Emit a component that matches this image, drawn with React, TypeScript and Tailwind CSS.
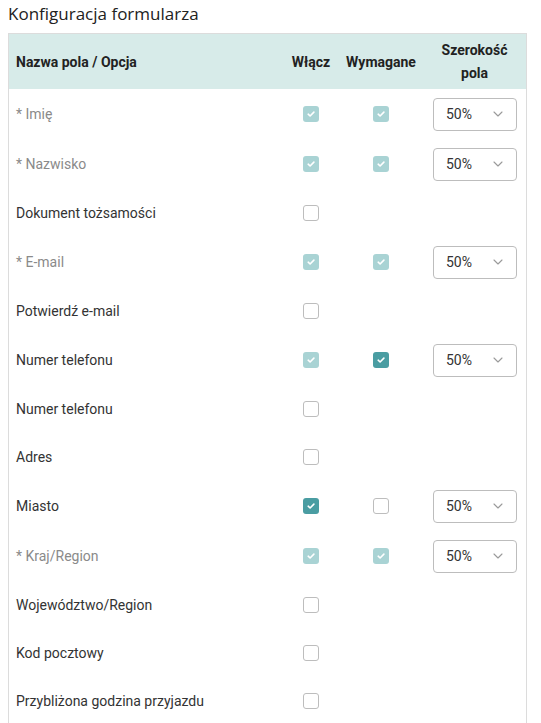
import React from 'react'

type Row = {
  label: string
  required?: boolean // label shown with * and greyed
  enabled: 'on' | 'off' | 'locked'
  req?: 'on' | 'off' | 'locked'
  width?: string
}

const rows: Row[] = [
  { label: '* Imię', required: true, enabled: 'locked', req: 'locked', width: '50%' },
  { label: '* Nazwisko', required: true, enabled: 'locked', req: 'locked', width: '50%' },
  { label: 'Dokument tożsamości', enabled: 'off' },
  { label: '* E-mail', required: true, enabled: 'locked', req: 'locked', width: '50%' },
  { label: 'Potwierdź e-mail', enabled: 'off' },
  { label: 'Numer telefonu', enabled: 'locked', req: 'on', width: '50%' },
  { label: 'Numer telefonu', enabled: 'off' },
  { label: 'Adres', enabled: 'off' },
  { label: 'Miasto', enabled: 'on', req: 'off', width: '50%' },
  { label: '* Kraj/Region', required: true, enabled: 'locked', req: 'locked', width: '50%' },
  { label: 'Województwo/Region', enabled: 'off' },
  { label: 'Kod pocztowy', enabled: 'off' },
  { label: 'Przybliżona godzina przyjazdu', enabled: 'off' },
]

const Checkbox = ({ state }: { state: 'on' | 'off' | 'locked' }) => {
  if (state === 'off') {
    return <div className="w-4 h-4 rounded-[3px] border border-[#bdbdbd] bg-white" />
  }
  return (
    <div
      className={`w-4 h-4 rounded-[3px] flex items-center justify-center ${
        state === 'on' ? 'bg-[#4a9da2]' : 'bg-[#a9d3d4]'
      }`}
    >
      <svg className="w-[10px] h-[10px]" viewBox="0 0 10 10" fill="none">
        <path d="M2.2 5.2l1.9 1.8 3.8-3.9" stroke="white" strokeWidth={1.6} strokeLinecap="round" strokeLinejoin="round" />
      </svg>
    </div>
  )
}

const WidthSelect = ({ value }: { value: string }) => (
  <div className="w-[84px] h-[33px] rounded-[4px] border border-[#bdbdbd] bg-white flex items-center justify-between pl-[12px] pr-[13px] text-[14px] text-[#333]">
    <span>{value}</span>
    <svg className="w-[10px] h-[6px]" viewBox="0 0 10 6" fill="none">
      <path d="M1 1l4 4 4-4" stroke="#9a9a9a" strokeWidth={1.1} strokeLinecap="round" strokeLinejoin="round" />
    </svg>
  </div>
)

export default function App() {
  return (
    <div className="bg-white w-[541px] h-[723px] overflow-hidden" style={{ fontFamily: 'Roboto, "Liberation Sans", sans-serif' }}>
      <h2
        className="pl-[8px] pt-[4px] h-[33px] text-[17px] leading-[20px] text-[#222]"
        style={{ fontFamily: '"Open Sans", "Noto Sans", sans-serif' }}
      >
        Konfiguracja formularza
      </h2>

      <div className="ml-[8px] w-[519px] border border-[#dcdcdc]">
        {/* header */}
        <div className="flex items-center h-[55px] bg-[#d7ebe9] text-[14px] font-bold text-[#222] leading-[22px]">
          <div className="flex-1 pl-[7px]">Nazwa pola / Opcja</div>
          <div className="w-[56px] text-center">Włącz</div>
          <div className="w-[84px] text-center">Wymagane</div>
          <div className="w-[103px] text-center leading-[23px]">
            Szerokość
            <br />
            pola
          </div>
        </div>

        {rows.map((row, i) => (
          <div
            key={i}
            className={`flex items-center text-[14px] ${row.width ? 'h-[50px]' : 'h-[48px]'}`}
          >
            <div className={`flex-1 pl-[7px] ${row.required ? 'text-[#8a8a8a]' : 'text-[#333]'}`}>
              {row.label}
            </div>
            <div className="w-[56px] flex justify-center">
              <Checkbox state={row.enabled} />
            </div>
            <div className="w-[84px] flex justify-center">
              {row.req && <Checkbox state={row.req} />}
            </div>
            <div className="w-[103px] pl-[10px]">
              {row.width && <WidthSelect value={row.width} />}
            </div>
          </div>
        ))}
      </div>
    </div>
  )
}
